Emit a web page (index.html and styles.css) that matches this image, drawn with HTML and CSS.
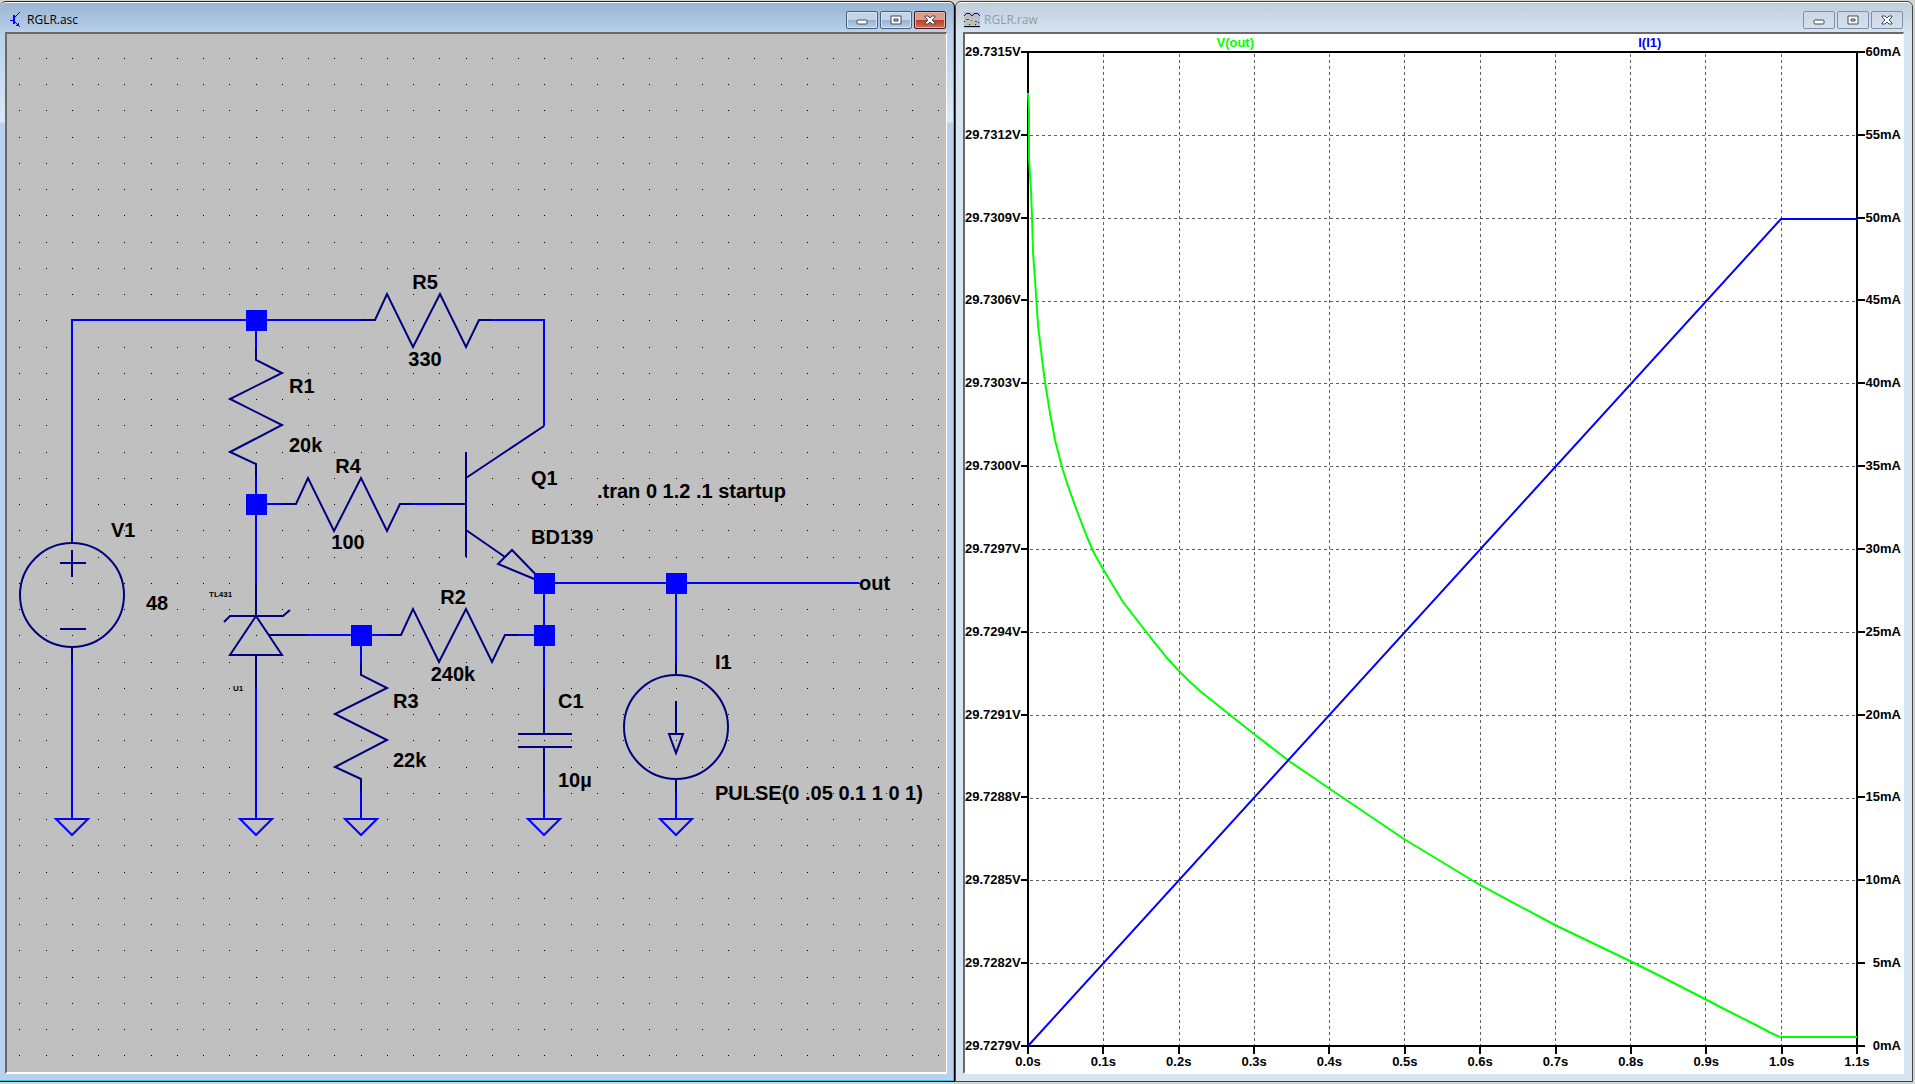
FILE: index.html
```
<!DOCTYPE html>
<html lang="en">
<head>
    <meta charset="UTF-8">
    <meta name="viewport" content="width=device-width, initial-scale=1.0">
    <title>RGLR</title>
    <link rel="stylesheet" href="styles.css">
</head>
<body>
    <main class="workspace">
        <section class="window active">
            <header class="titlebar">
                <svg class="app-icon" width="16" height="16" viewBox="0 0 16 16" shape-rendering="crispEdges">
                    <path d="M1 8h4M5 6l6-6M5 9l6 6" stroke="#0000ff" fill="none"/>
                    <path d="M4 3h2v9H4zM10 10v4H6z" fill="#0000ff"/>
                </svg>
                <h1>RGLR.asc</h1>
                <div class="window-buttons">
                    <button type="button" aria-label="Minimize">
                        <svg width="14" height="12" viewBox="0 0 14 12"><rect x="2" y="6" width="10" height="4" rx="1"/></svg>
                    </button>
                    <button type="button" aria-label="Maximize">
                        <svg width="14" height="12" viewBox="0 0 14 12"><path fill-rule="evenodd" d="M2 2h10v8H2zM5 5v2h4V5z"/></svg>
                    </button>
                    <button type="button" class="close" aria-label="Close">
                        <svg width="14" height="12" viewBox="0 0 14 12"><path d="M2 2h3l2 2 2-2h3v1L9 6l3 3v1H9L7 8l-2 2H2V9l3-3-3-3z"/></svg>
                    </button>
                </div>
            </header>
            <div class="client schematic">
                <svg class="sheet">
                    <defs>
                        <pattern id="grid" x="19" y="58" width="105" height="105" patternUnits="userSpaceOnUse">
                            <path id="dots" d="M0 0h1v1H0zM27 0h1v1h-1zM53 0h1v1h-1zM79 0h1v1h-1z"/>
                            <use href="#dots" y="26"/>
                            <use href="#dots" y="52"/>
                            <use href="#dots" y="79"/>
                        </pattern>
                        <path id="gnd" d="M-16 0H16L0 16z"/>
                        <path id="res-h" d="M0 0H14L26 -26L52 27L79 -26L105 27L118 0H131"/>
                        <path id="res-v" d="M0 0V12L26 25L-26 51L26 77L-26 104L0 116V129"/>
                        <rect id="node" x="-10" y="-10" width="21" height="21"/>
                    </defs>
                    <g transform="translate(-7 -34)">
                        <rect x="7" y="34" width="100%" height="100%" fill="url(#grid)"/>

                        <g class="wire">
                            <path d="M72 531V320H361M492 320H544V426"/>
                            <path d="M256 320V348M256 477V583M256 504H282M413 504H440"/>
                            <path d="M72 662V819M256 688V819"/>
                            <path d="M308 635H387M361 635V663M361 792V819"/>
                            <path d="M518 635H544M544 583V689M544 793V819"/>
                            <path d="M544 583H859M676 583V663M676 793V819"/>
                            <use href="#gnd" x="72" y="819"/>
                            <use href="#gnd" x="256" y="819"/>
                            <use href="#gnd" x="361" y="819"/>
                            <use href="#gnd" x="544" y="819"/>
                            <use href="#gnd" x="676" y="819"/>
                        </g>

                        <g class="part">
                            <!-- resistors -->
                            <use href="#res-h" x="361" y="320"/>
                            <use href="#res-h" x="282" y="504"/>
                            <use href="#res-h" x="387" y="635"/>
                            <use href="#res-v" x="256" y="348"/>
                            <use href="#res-v" x="361" y="663"/>
                            <!-- Q1 -->
                            <path d="M440 504H466M466 452V557M466 478L544 426M466 530L505 557M512 550L498 564L544 583z"/>
                            <!-- V1 -->
                            <circle cx="72" cy="595" r="52"/>
                            <path d="M72 531V543M72 647V662M60 563H86M72 550V577M60 629H86"/>
                            <!-- TL431 -->
                            <path d="M256 583V616M224 622L230 616H283L290 610M256 616L230 655H282zM269 635H308M256 655V688"/>
                            <!-- C1 -->
                            <path d="M544 689V734M518 734H572M518 747H572M544 747V793"/>
                            <!-- I1 -->
                            <circle cx="676" cy="727" r="52"/>
                            <path d="M676 663V675M676 779V793M676 701V734M669 734H683L676 753z"/>
                        </g>

                        <g class="junction">
                            <use href="#node" x="256" y="320"/>
                            <use href="#node" x="256" y="504"/>
                            <use href="#node" x="361" y="635"/>
                            <use href="#node" x="544" y="583"/>
                            <use href="#node" x="544" y="635"/>
                            <use href="#node" x="676" y="583"/>
                        </g>

                        <g class="label">
                            <text x="111" y="537">V1</text>
                            <text x="146" y="610">48</text>
                            <text x="289" y="393">R1</text>
                            <text x="289" y="452">20k</text>
                            <text x="393" y="708">R3</text>
                            <text x="393" y="767">22k</text>
                            <text x="531" y="485">Q1</text>
                            <text x="531" y="544">BD139</text>
                            <text x="597" y="498">.tran 0 1.2 .1 startup</text>
                            <text x="859" y="590">out</text>
                            <text x="558" y="708">C1</text>
                            <text x="558" y="787">10µ</text>
                            <text x="715" y="669">I1</text>
                            <text x="715" y="800">PULSE(0 .05 0.1 1 0 1)</text>
                        </g>
                        <g class="label centered">
                            <text x="425" y="289">R5</text>
                            <text x="425" y="366">330</text>
                            <text x="348" y="473">R4</text>
                            <text x="348" y="549">100</text>
                            <text x="453" y="604">R2</text>
                            <text x="453" y="681">240k</text>
                        </g>
                        <g class="label small">
                            <text x="209" y="597">TL431</text>
                            <text x="233" y="691">U1</text>
                        </g>
                    </g>
                </svg>
            </div>
        </section>

        <section class="window inactive">
            <header class="titlebar">
                <svg class="app-icon" width="16" height="16" viewBox="0 0 16 16" shape-rendering="crispEdges">
                    <rect width="16" height="16" fill="#c0c0c0"/>
                    <path d="M0 4l3-3h2l3 3 3-3h2l3 3" stroke="#0000ff" fill="none"/>
                    <path d="M2 7h3M7 8h1M11 9h2" stroke="#ff0000"/>
                    <path d="M5 12h1M11 12h1M14 10h1" stroke="#0000ff"/>
                    <path d="M0 14h16v1H0zM0 9h1v1H0z"/>
                </svg>
                <h1>RGLR.raw</h1>
                <div class="window-buttons">
                    <button type="button" aria-label="Minimize">
                        <svg width="14" height="12" viewBox="0 0 14 12"><rect x="2" y="6" width="10" height="4" rx="1"/></svg>
                    </button>
                    <button type="button" aria-label="Maximize">
                        <svg width="14" height="12" viewBox="0 0 14 12"><path fill-rule="evenodd" d="M2 2h10v8H2zM5 5v2h4V5z"/></svg>
                    </button>
                    <button type="button" aria-label="Close">
                        <svg width="14" height="12" viewBox="0 0 14 12"><path d="M2 2h3l2 2 2-2h3v1L9 6l3 3v1H9L7 8l-2 2H2V9l3-3-3-3z"/></svg>
                    </button>
                </div>
            </header>
            <div class="client waveform">
                <div class="traces">
                    <span class="v-out">V(out)</span>
                    <span class="i-load">I(I1)</span>
                </div>
                <ul class="axis volts">
                    <li>29.7315V</li>
                    <li>29.7312V</li>
                    <li>29.7309V</li>
                    <li>29.7306V</li>
                    <li>29.7303V</li>
                    <li>29.7300V</li>
                    <li>29.7297V</li>
                    <li>29.7294V</li>
                    <li>29.7291V</li>
                    <li>29.7288V</li>
                    <li>29.7285V</li>
                    <li>29.7282V</li>
                    <li>29.7279V</li>
                </ul>
                <svg class="plot" viewBox="0 0 829 994" preserveAspectRatio="none">
                    <path class="gridline" d="M75 2V994M151 2V994M226 2V994M301 2V994M376 2V994M452 2V994M527 2V994M602 2V994M677 2V994M753 2V994"/>
                    <path class="gridline" d="M2 83H829M2 166H829M2 249H829M2 331H829M2 414H829M2 497H829M2 580H829M2 663H829M2 746H829M2 828H829M2 911H829"/>
                    <rect class="frame" width="829" height="994"/>
                    <polyline class="trace v-out" points="0,41 1,59 1,106 3,139 4,164 5,200 8,242 10,273 14,307 17,330 22,361 27,388 34,415 40,434 49,459 59,485 66,501 75,517 95,550 119,581 139,606 151,619 160,628 172,639 226,682 261,709 302,737 376,787 452,833 527,873 602,909 636,926 677,947 700,959 728,973 741,980 752,985 829,985"/>
                    <polyline class="trace i-load" points="0,994 753,167 829,167"/>
                </svg>
                <ul class="axis amps">
                    <li>60mA</li>
                    <li>55mA</li>
                    <li>50mA</li>
                    <li>45mA</li>
                    <li>40mA</li>
                    <li>35mA</li>
                    <li>30mA</li>
                    <li>25mA</li>
                    <li>20mA</li>
                    <li>15mA</li>
                    <li>10mA</li>
                    <li>5mA</li>
                    <li>0mA</li>
                </ul>
                <ul class="axis time">
                    <li>0.0s</li>
                    <li>0.1s</li>
                    <li>0.2s</li>
                    <li>0.3s</li>
                    <li>0.4s</li>
                    <li>0.5s</li>
                    <li>0.6s</li>
                    <li>0.7s</li>
                    <li>0.8s</li>
                    <li>0.9s</li>
                    <li>1.0s</li>
                    <li>1.1s</li>
                </ul>
            </div>
        </section>
    </main>
</body>
</html>
```
FILE: styles.css
```
* {
    box-sizing: border-box;
}
body {
    margin: 0;
    background: #d4d4d4;
    color: #000;
    font-family: "Liberation Sans", Arial, sans-serif;
}
.workspace {
    display: grid;
    grid-template-columns: 955fr 958fr;
    height: 100vh;
    padding: 1px 2px 2px 0;
}
ul {
    list-style: none;
    margin: 0;
    padding: 0;
}

/* windows */
.window {
    display: flex;
    flex-direction: column;
    min-width: 0;
    border: 1px solid #333;
    border-radius: 6px 6px 0 0;
    overflow: hidden;
}
.active {
    padding: 0 7px 7px 5px;
    border-color: #222 #000 #000;
    border-left: 0;
    background: linear-gradient(#99b4d1, #b9d1ea 31px, #b9d1ea 34px, #dce9f7 120px, #b9d1ea 121px);
    box-shadow: inset -1px -1px #35c8e8, inset 0 1px #fff;
}
.inactive {
    padding: 0 8px 7px 7px;
    border-color: #444;
    background: linear-gradient(#bfcddb, #d7e4f2 31px);
    box-shadow: inset 0 1px #fff;
}
.titlebar {
    display: flex;
    align-items: center;
    gap: 2px;
    height: 30px;
    padding: 6px 1px 0 4px;
}
.inactive .titlebar {
    gap: 4px;
    padding-left: 1px;
}
.titlebar h1 {
    flex: 1;
    margin: 0;
    font: 12px/16px "Open Sans", "Noto Sans", sans-serif;
}
.inactive h1 {
    color: #929ba3;
}
.window-buttons {
    display: flex;
    align-self: flex-start;
    gap: 2px;
    margin-top: 3px;
}
.window-buttons button {
    display: flex;
    align-items: center;
    justify-content: center;
    width: 32px;
    height: 18px;
    padding: 0;
    border: 1px solid #49617f;
    border-radius: 2px;
    background: linear-gradient(#c3d4e7 48%, #98b3d0 52%, #b9d1e9);
    box-shadow: inset 0 0 0 1px #d5e4f4;
}
.window-buttons svg {
    fill: #fff;
    stroke: #444b58;
    stroke-width: 1;
}
.window-buttons .close {
    border-color: #4a1420;
    background: linear-gradient(#dc9c8f 48%, #b8402e 52%, #cf7052);
    box-shadow: inset 0 0 0 1px #e8b3a5;
}
.inactive .window-buttons button {
    border-color: #8291a8;
    background: linear-gradient(#cbd7e4, #d3e0ee);
    box-shadow: none;
}
.client {
    flex: 1;
    min-height: 0;
    border: solid;
    border-width: 2px 1px 2px 2px;
    border-color: #696969 #fff #fff #696969;
}

/* schematic editor */
.schematic {
    background: #c0c0c0;
}
.sheet {
    display: block;
    width: 100%;
    height: 100%;
    fill: none;
    stroke-width: 2;
}
#dots {
    fill: #000;
}
.wire {
    stroke: #0000ff;
}
.part {
    stroke: #000080;
}
.junction {
    fill: #0000ff;
    shape-rendering: crispEdges;
}
.label {
    fill: #000;
    font-size: 20px;
    font-weight: bold;
}
.centered {
    text-anchor: middle;
}
.small {
    font-size: 8px;
}

/* waveform viewer */
.waveform {
    display: grid;
    grid-template: 18px minmax(0, 1fr) 26px / 63px minmax(0, 1fr) 46px;
    background: #fff;
    font-size: 13px;
    font-weight: bold;
    line-height: 16px;
}
.traces {
    grid-area: 1 / 2;
    display: flex;
    padding-top: 1px;
}
.traces span {
    flex: 1;
    text-align: center;
}
.traces .v-out {
    color: #00ff00;
}
.traces .i-load {
    color: #0000ff;
}
.plot {
    grid-area: 2 / 2;
    width: 100%;
    height: 100%;
    overflow: visible;
    fill: none;
}
.plot * {
    vector-effect: non-scaling-stroke;
}
.gridline {
    stroke: #606060;
    stroke-dasharray: 3 3;
    shape-rendering: crispEdges;
}
.frame {
    stroke: #000;
    stroke-width: 2;
}
.trace {
    stroke-width: 2;
}
.trace.v-out {
    stroke: #00ff00;
}
.trace.i-load {
    stroke: #0000ff;
}
.axis {
    display: flex;
    justify-content: space-between;
}
.axis li {
    display: flex;
    align-items: center;
}
.axis li::before {
    content: "";
    width: 8px;
    height: 2px;
    background: #000;
}
.volts, .amps {
    flex-direction: column;
    margin: -8px 0;
}
.volts {
    grid-area: 2 / 1;
}
.volts li {
    flex-direction: row-reverse;
}
.amps {
    grid-area: 2 / 3;
    padding-right: 2px;
}
.amps li {
    justify-content: space-between;
}
.time {
    grid-area: 3 / 2;
    margin: 0 -20px;
}
.time li {
    flex-direction: column;
    width: 40px;
}
.time li::before {
    width: 2px;
    height: 8px;
}
```
